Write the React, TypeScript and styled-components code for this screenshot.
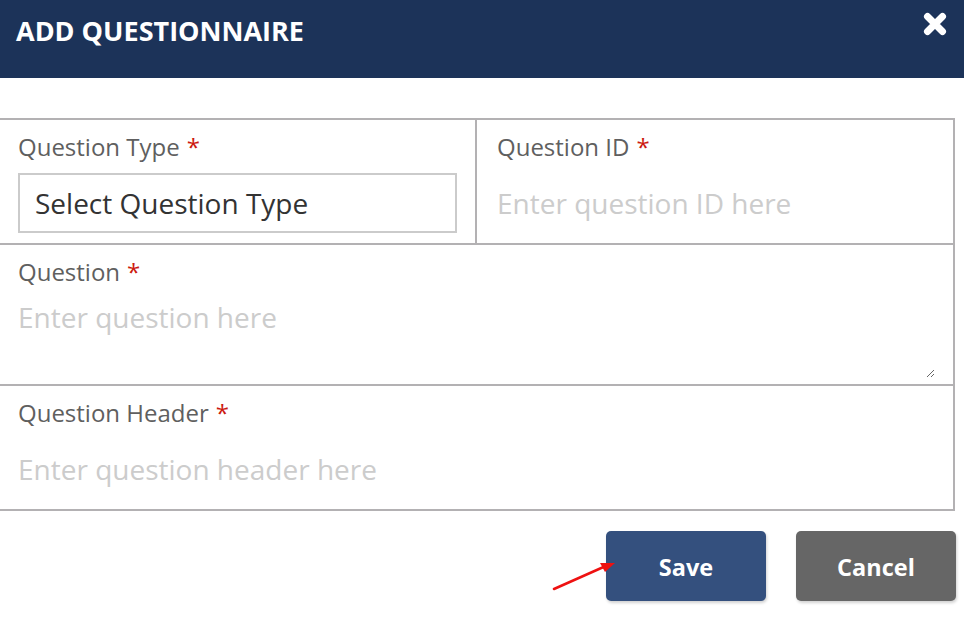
import React from "react";
import styled, { createGlobalStyle } from "styled-components";

const GlobalStyle = createGlobalStyle`
  html, body { margin: 0; padding: 0; background: #ffffff; }
  body { font-family: "Open Sans", "Liberation Sans", sans-serif; }
  * { box-sizing: border-box; }
`;

const Page = styled.div`
  position: relative;
  width: 964px;
  height: 620px;
  overflow: hidden;
  background: #ffffff;
`;

const Header = styled.header`
  height: 78px;
  background: #1c3359;
  display: flex;
  justify-content: space-between;
  align-items: flex-start;
  padding: 12px 17px 0 16px;
`;

const Title = styled.h1`
  margin: 0;
  font-size: 27px;
  line-height: 1.4;
  font-weight: 700;
  color: #ffffff;
  letter-spacing: 0;
`;

const CloseButton = styled.button`
  margin: 0;
  padding: 0;
  border: none;
  background: transparent;
  width: 24px;
  height: 24px;
  display: flex;
  cursor: pointer;
`;

const Form = styled.form`
  margin-top: 40px;
  width: 955px;
  border-top: 2px solid #b3b1b3;
  border-right: 2px solid #b3b1b3;
`;

const Row = styled.div<{ $cols?: boolean }>`
  display: grid;
  grid-template-columns: ${(p) => (p.$cols ? "477px 1fr" : "1fr")};
  border-bottom: 2px solid #b3b1b3;
`;

const Cell = styled.div<{ $divider?: boolean; $pl?: number }>`
  display: flex;
  flex-direction: column;
  padding: 10px 18px 10px ${(p) => p.$pl ?? 18}px;
  border-right: ${(p) => (p.$divider ? "2px solid #b3b1b3" : "none")};
`;

const Label = styled.label`
  font-size: 24px;
  line-height: 33px;
  color: #5f5f5f;
  margin-bottom: 10px;
`;

const Required = styled.span`
  color: #cc1a10;
  margin-left: 7px;
`;

const Select = styled.select`
  appearance: none;
  -webkit-appearance: none;
  height: 60px;
  width: 100%;
  border: 2px solid #cbcbcb;
  border-radius: 0;
  background: #ffffff;
  padding: 0 0 0 15px;
  font-family: "Open Sans", "Liberation Sans", sans-serif;
  font-size: 28px;
  color: #333333;
  outline: none;
`;

const TextInput = styled.input`
  height: 60px;
  width: 100%;
  border: none;
  padding: 0;
  background: transparent;
  font-family: "Open Sans", "Liberation Sans", sans-serif;
  font-size: 28px;
  color: #333333;
  outline: none;
  &::placeholder { color: #cccccc; }
`;

const TextArea = styled.textarea`
  margin-top: -6px;
  margin-bottom: -4px;
  height: 86px;
  width: 100%;
  border: none;
  padding: 6px 0;
  background: transparent;
  font-family: "Open Sans", "Liberation Sans", sans-serif;
  font-size: 28px;
  line-height: 1.4;
  color: #333333;
  outline: none;
  resize: vertical;
  &::placeholder { color: #cccccc; }
`;

const Actions = styled.div`
  display: flex;
  justify-content: flex-end;
  gap: 30px;
  margin-top: 20px;
  padding-right: 8px;
`;

const Button = styled.button<{ $variant: "primary" | "secondary" }>`
  width: 160px;
  height: 70px;
  border: none;
  border-radius: 5px;
  background: ${(p) => (p.$variant === "primary" ? "#34507e" : "#666666")};
  color: #ffffff;
  font-family: "Open Sans", "Liberation Sans", sans-serif;
  font-size: 23.5px;
  font-weight: 700;
  padding: 2px 0 0;
  box-shadow: 1px 2px 3px rgba(0, 0, 0, 0.18);
  cursor: pointer;
`;

const Arrow = styled.svg`
  position: absolute;
  left: 550px;
  top: 556px;
  width: 70px;
  height: 40px;
  pointer-events: none;
`;

export default function App() {
  return (
    <Page>
      <GlobalStyle />
      <Header>
        <Title>ADD QUESTIONNAIRE</Title>
        <CloseButton type="button" aria-label="Close">
          <svg width="24" height="24" viewBox="0 0 24 24">
            <path
              d="M4.5 4.5 L19.5 19.5 M19.5 4.5 L4.5 19.5"
              stroke="#ffffff"
              strokeWidth="7"
              strokeLinecap="round"
              fill="none"
            />
          </svg>
        </CloseButton>
      </Header>
      <Form onSubmit={(e) => e.preventDefault()}>
        <Row $cols>
          <Cell $divider>
            <Label>
              Question Type<Required>*</Required>
            </Label>
            <Select defaultValue="">
              <option value="">Select Question Type</option>
            </Select>
          </Cell>
          <Cell $pl={20}>
            <Label>
              Question ID<Required>*</Required>
            </Label>
            <TextInput placeholder="Enter question ID here" />
          </Cell>
        </Row>
        <Row>
          <Cell>
            <Label>
              Question<Required>*</Required>
            </Label>
            <TextArea placeholder="Enter question here" />
          </Cell>
        </Row>
        <Row>
          <Cell>
            <Label>
              Question Header<Required>*</Required>
            </Label>
            <TextInput placeholder="Enter question header here" />
          </Cell>
        </Row>
      </Form>
      <Actions>
        <Button type="button" $variant="primary">
          Save
        </Button>
        <Button type="button" $variant="secondary">
          Cancel
        </Button>
      </Actions>
      <Arrow viewBox="0 0 70 40">
        <line x1="4" y1="33" x2="58" y2="9" stroke="#ee1111" strokeWidth="2.6" strokeLinecap="round" />
        <polygon points="65,7 50,7 55,16" fill="#ee1111" />
      </Arrow>
    </Page>
  );
}
